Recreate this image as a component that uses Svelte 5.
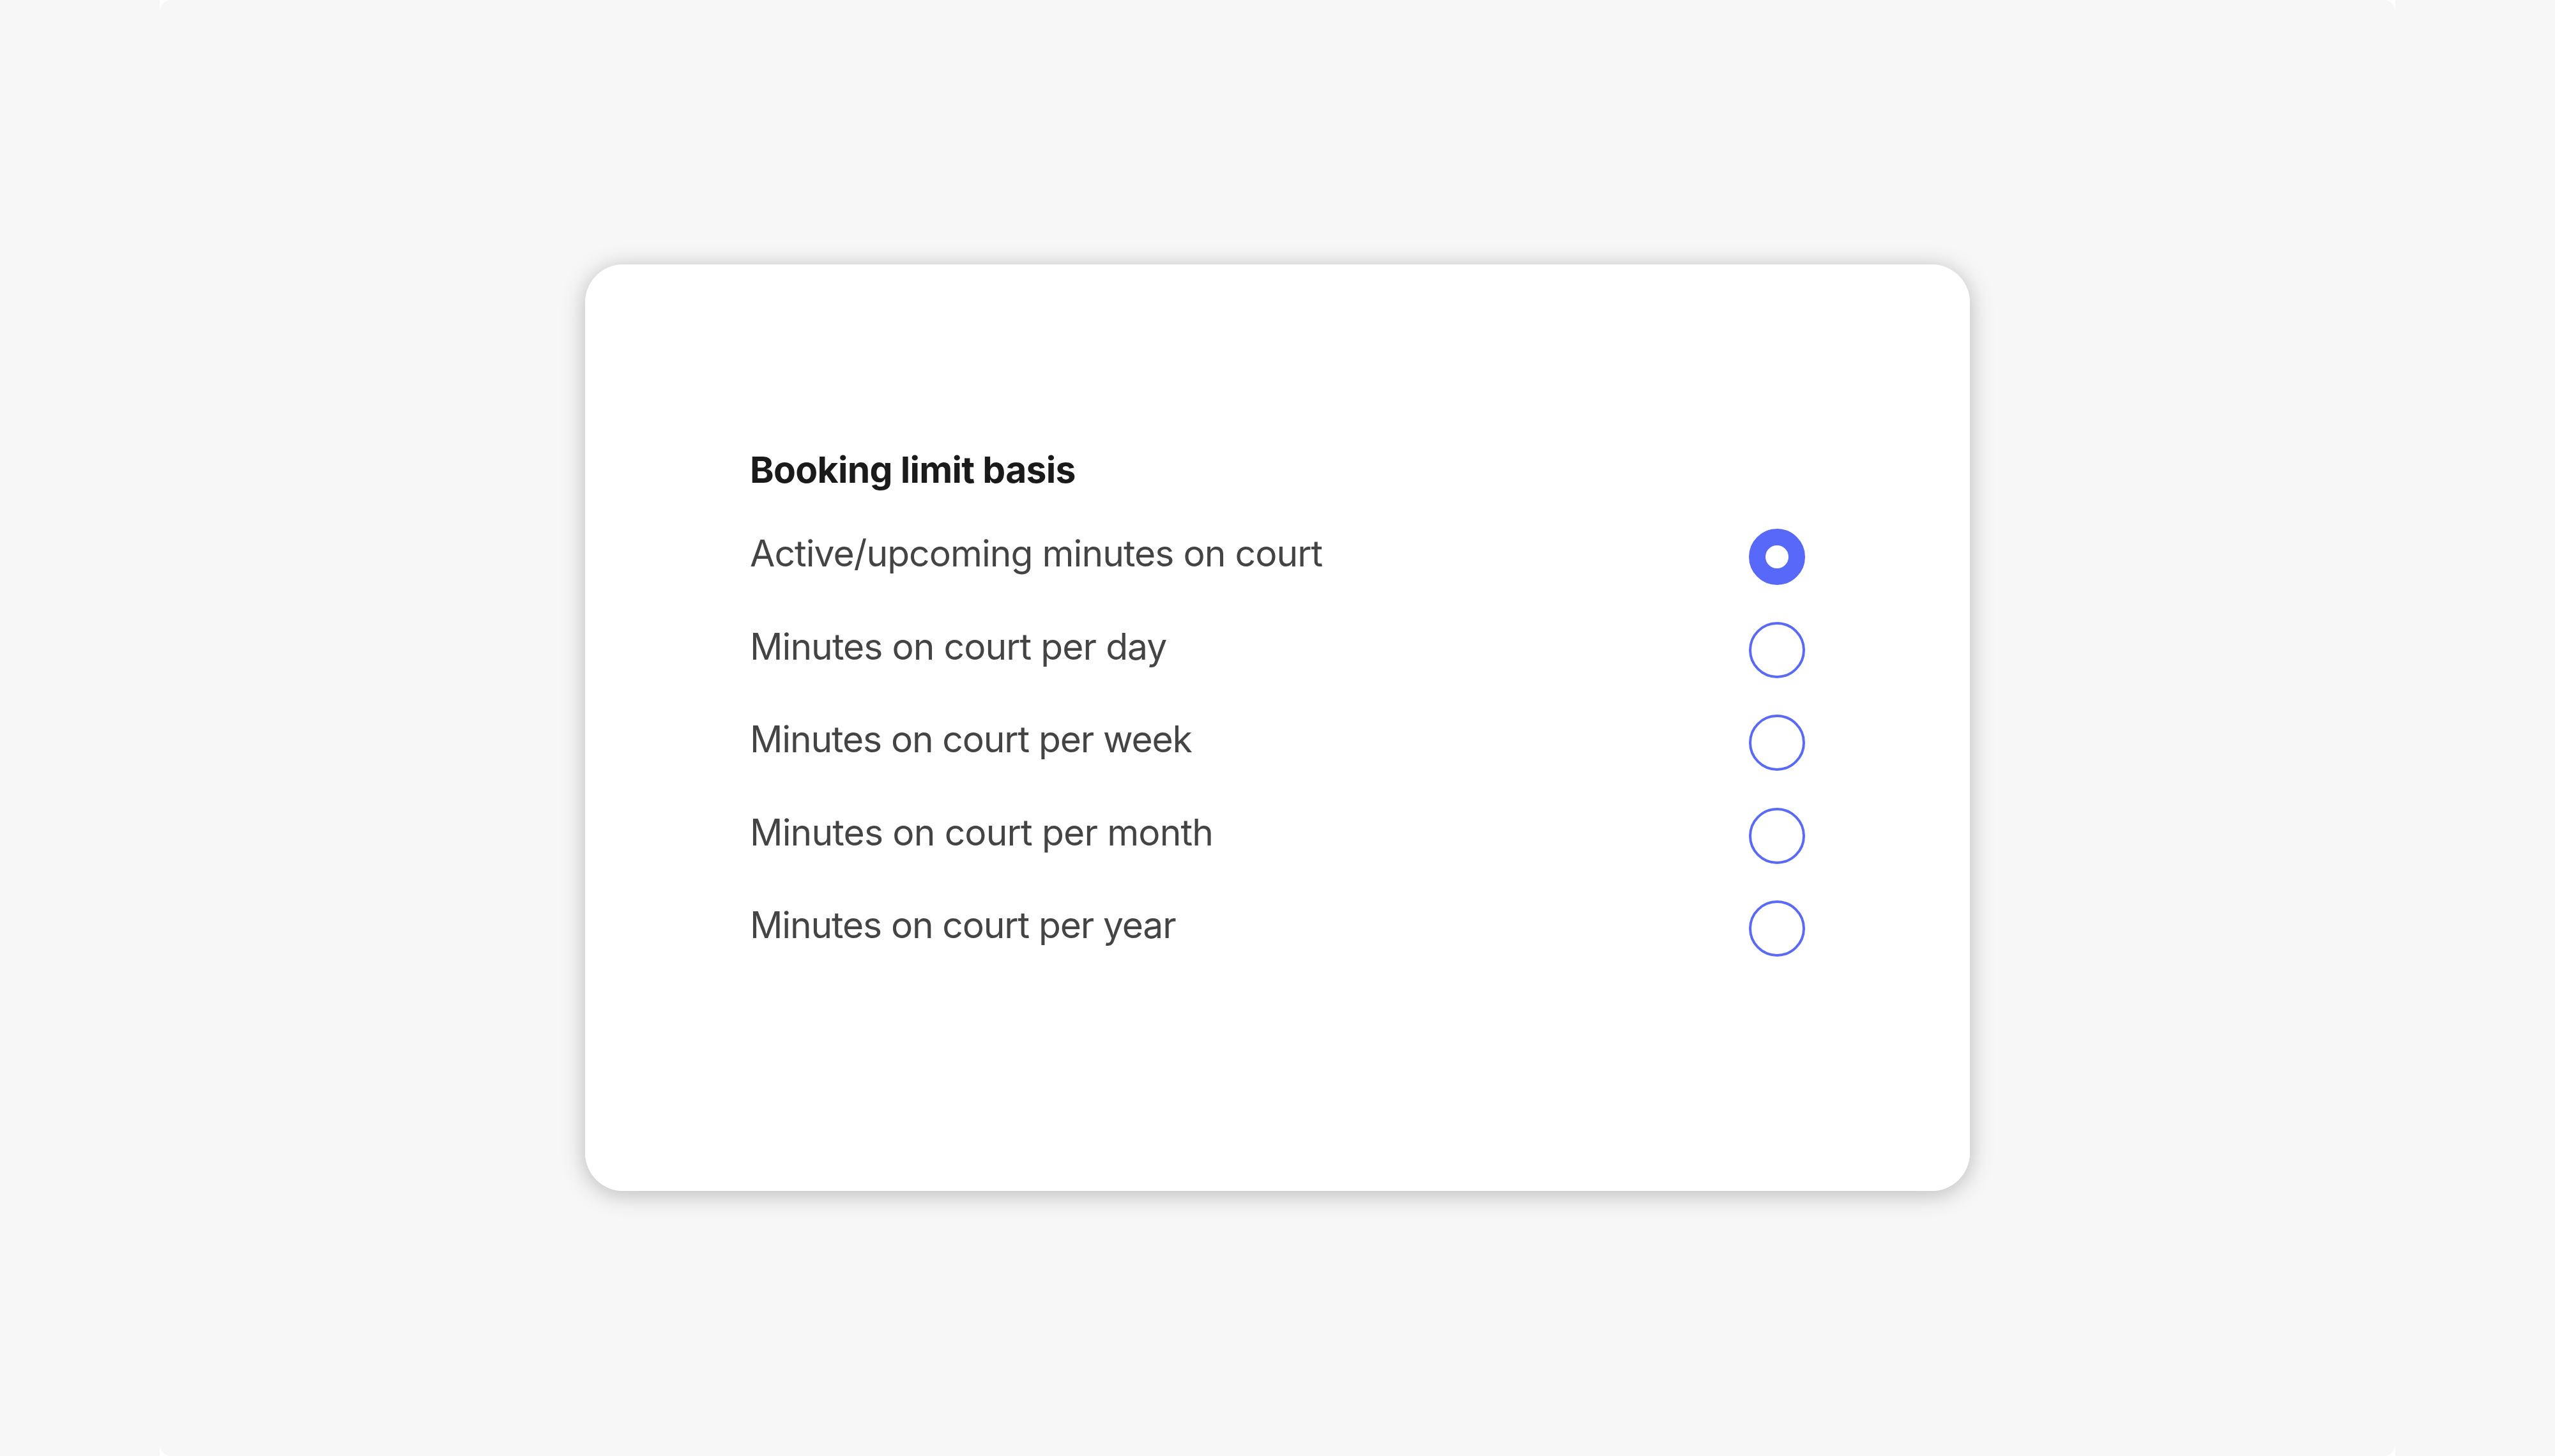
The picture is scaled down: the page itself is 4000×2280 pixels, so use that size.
<script>
  let basis = $state('active');

  const options = [
    { value: 'active', label: 'Active/upcoming minutes on court' },
    { value: 'day', label: 'Minutes on court per day' },
    { value: 'week', label: 'Minutes on court per week' },
    { value: 'month', label: 'Minutes on court per month' },
    { value: 'year', label: 'Minutes on court per year' }
  ];
</script>

<div class="page">
  <main class="panel">
    <fieldset class="card">
      <legend class="title">Booking limit basis</legend>
      <div class="options">
        {#each options as option (option.value)}
          <label class="option {option.value}">
            <span class="label">{option.label}</span>
            <input type="radio" name="basis" value={option.value} bind:group={basis} />
          </label>
        {/each}
      </div>
    </fieldset>
  </main>
</div>

<style>
  :global(body) {
    background: #f7f7f7;
  }

  .page {
    width: 3500px;
    height: 2280px;
    margin: 0 auto;
    background: #fff;
  }

  .panel {
    height: 100%;
    box-sizing: border-box;
    padding-top: 414px;
    border-radius: 18px;
    background: #f7f7f7;
    font-family: Inter, "Liberation Sans", sans-serif;
    font-size: 57px;
    line-height: 70px;
  }

  .card {
    width: 2168px;
    height: 1451px;
    box-sizing: border-box;
    margin: 0 auto;
    padding: 287px 258px 0;
    border: none;
    border-radius: 60px;
    background: #fff;
    box-shadow: 0 5px 36px rgba(0, 0, 0, 0.26);
  }

  .title {
    float: left;
    width: 100%;
    padding: 0;
    color: #1a1a1a;
    font-weight: 700;
    letter-spacing: -0.68px;
  }

  .options {
    clear: both;
    display: flex;
    flex-direction: column;
    gap: 57.6px;
    padding-top: 57px;
  }

  .option {
    display: flex;
    justify-content: space-between;
    align-items: flex-start;
    height: 88px;
    color: #444;
    letter-spacing: -0.95px;
    cursor: pointer;
  }

  .month {
    letter-spacing: -0.85px;
  }

  .week,
  .year {
    letter-spacing: -1.15px;
  }

  .label {
    padding-top: 4px;
  }

  input {
    appearance: none;
    width: 88px;
    height: 88px;
    box-sizing: border-box;
    margin: 0;
    border: 4px solid #5b6af5;
    border-radius: 50%;
    background: #fff;
    cursor: pointer;
  }

  input:checked {
    border: 26px solid #5868f9;
  }
</style>
